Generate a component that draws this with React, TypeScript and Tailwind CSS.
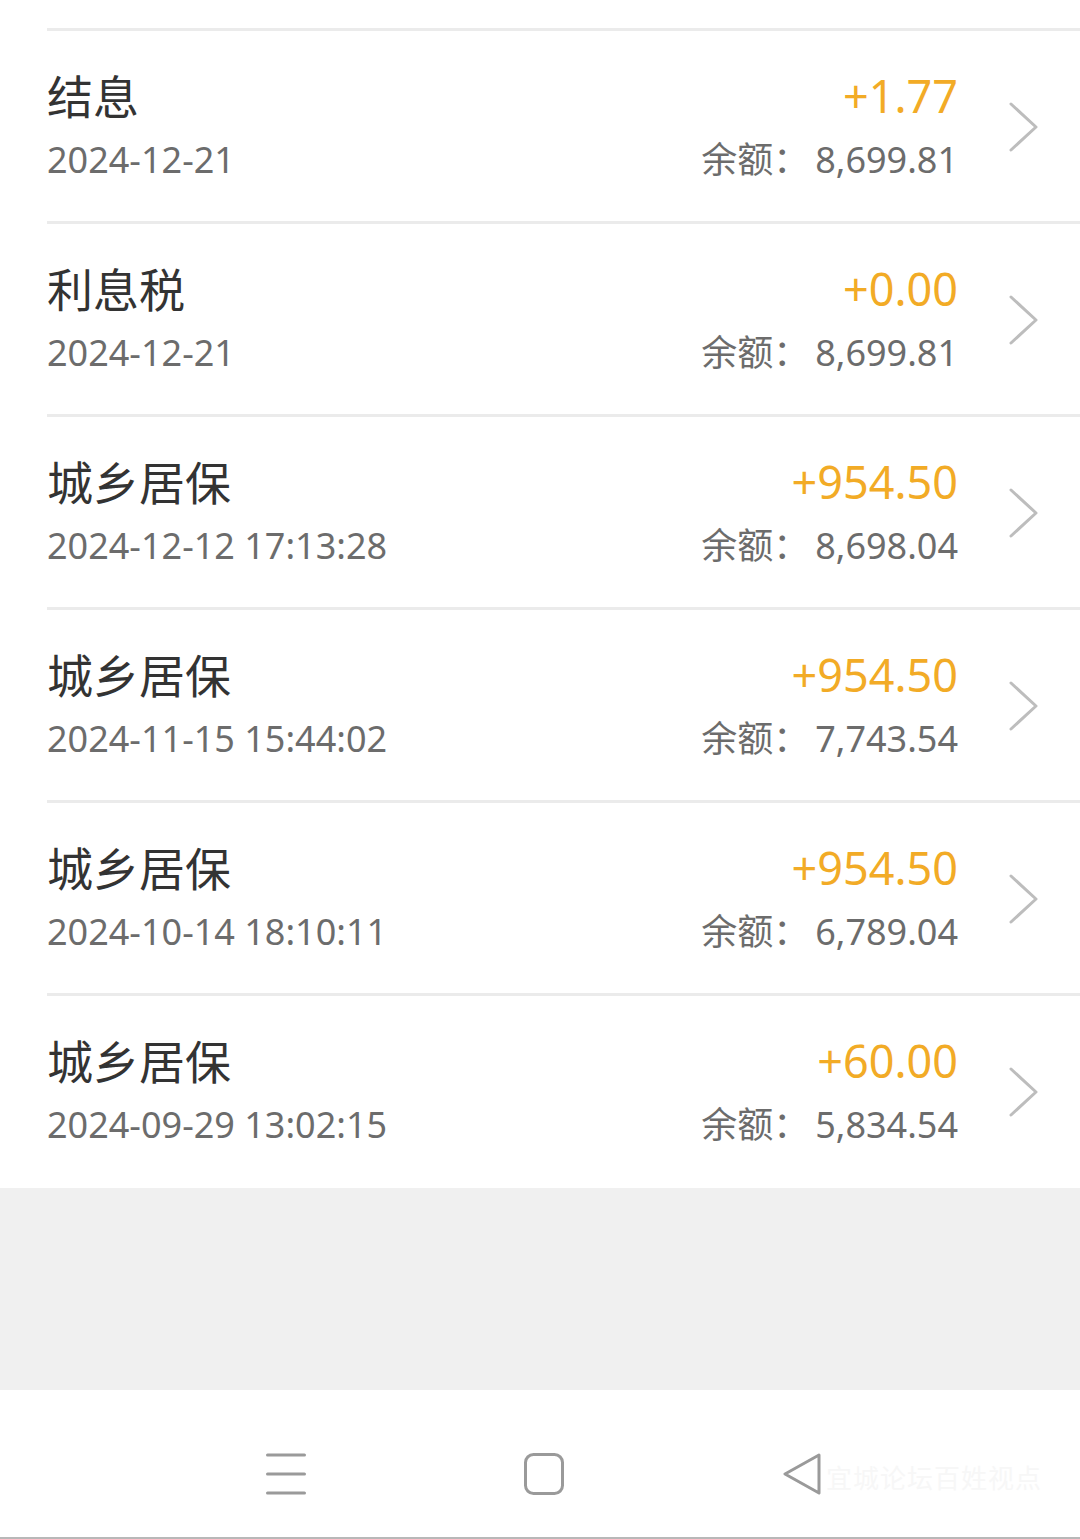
import React from 'react'

type Record = {
  title: string
  time: string
  amount: string
  balance: string
}

const RECORDS: Record[] = [
  { title: '结息', time: '2024-12-21', amount: '+1.77', balance: '8,699.81' },
  { title: '利息税', time: '2024-12-21', amount: '+0.00', balance: '8,699.81' },
  { title: '城乡居保', time: '2024-12-12 17:13:28', amount: '+954.50', balance: '8,698.04' },
  { title: '城乡居保', time: '2024-11-15 15:44:02', amount: '+954.50', balance: '7,743.54' },
  { title: '城乡居保', time: '2024-10-14 18:10:11', amount: '+954.50', balance: '6,789.04' },
  { title: '城乡居保', time: '2024-09-29 13:02:15', amount: '+60.00', balance: '5,834.54' },
]

const font = { fontFamily: '"Noto Sans", "Noto Sans CJK SC", sans-serif' }

function Chevron() {
  return (
    <svg width="30" height="50" viewBox="0 0 30 50" fill="none" className="shrink-0">
      <path d="M2 2 L27 25 L2 48" stroke="#bdbdbd" strokeWidth="3" strokeLinecap="round" strokeLinejoin="round" />
    </svg>
  )
}

function Row({ r }: { r: Record }) {
  return (
    <div className="ml-[47px] border-t-[3px] border-[#ebebeb]">
      <div className="flex items-center pt-[37px] pb-[36px] pr-[41px]">
        <div className="flex-1 min-w-0">
          <p className="text-[46px] leading-[56px] text-[#333333]">{r.title}</p>
          <p className="mt-[11px] text-[36px] leading-[50px] text-[#6c6c6c]">{r.time}</p>
        </div>
        <div className="flex flex-col items-end">
          <p className="text-[45px] leading-[56px] text-[#f2ab26]">{r.amount}</p>
          <p className="mt-[11px] text-[36px] leading-[50px] text-[#6c6c6c]">
            余额：<span className="ml-[6px]">{r.balance}</span>
          </p>
        </div>
        <div className="ml-[51px]">
          <Chevron />
        </div>
      </div>
    </div>
  )
}

export default function App() {
  return (
    <div className="w-[1080px] h-[1539px] flex flex-col bg-white overflow-hidden" style={font}>
      {/* transaction list */}
      <div className="pt-[28px] pb-[2px] bg-white">
        {RECORDS.map((r, i) => (
          <Row key={i} r={r} />
        ))}
      </div>

      {/* empty area */}
      <div className="h-[202px] bg-[#f0f0f0]" />

      {/* system nav bar */}
      <div className="relative flex-1 flex items-center justify-center gap-[218px] pt-[20px] pl-[8px] bg-white border-b-[2px] border-[#b8b8b8]">
        <svg width="40" height="42" viewBox="0 0 40 42">
          <path d="M1.5 2 H38.5 M1.5 21 H38.5 M1.5 40 H38.5" stroke="#9a9a9a" strokeWidth="3" strokeLinecap="round" />
        </svg>
        <svg width="40" height="42" viewBox="0 0 40 42">
          <rect x="1.5" y="1.5" width="37" height="39" rx="8" stroke="#9a9a9a" strokeWidth="3" fill="none" />
        </svg>
        <svg width="40" height="42" viewBox="0 0 40 42">
          <path d="M37 2 L3 21 L37 40 Z" stroke="#9a9a9a" strokeWidth="3" strokeLinejoin="round" fill="none" />
        </svg>
        <span className="absolute left-[826px] top-[72px] text-[26px] leading-[32px] text-[#f7f7f7] tracking-[1px]">
          宜城论坛百姓视点
        </span>
      </div>
    </div>
  )
}
